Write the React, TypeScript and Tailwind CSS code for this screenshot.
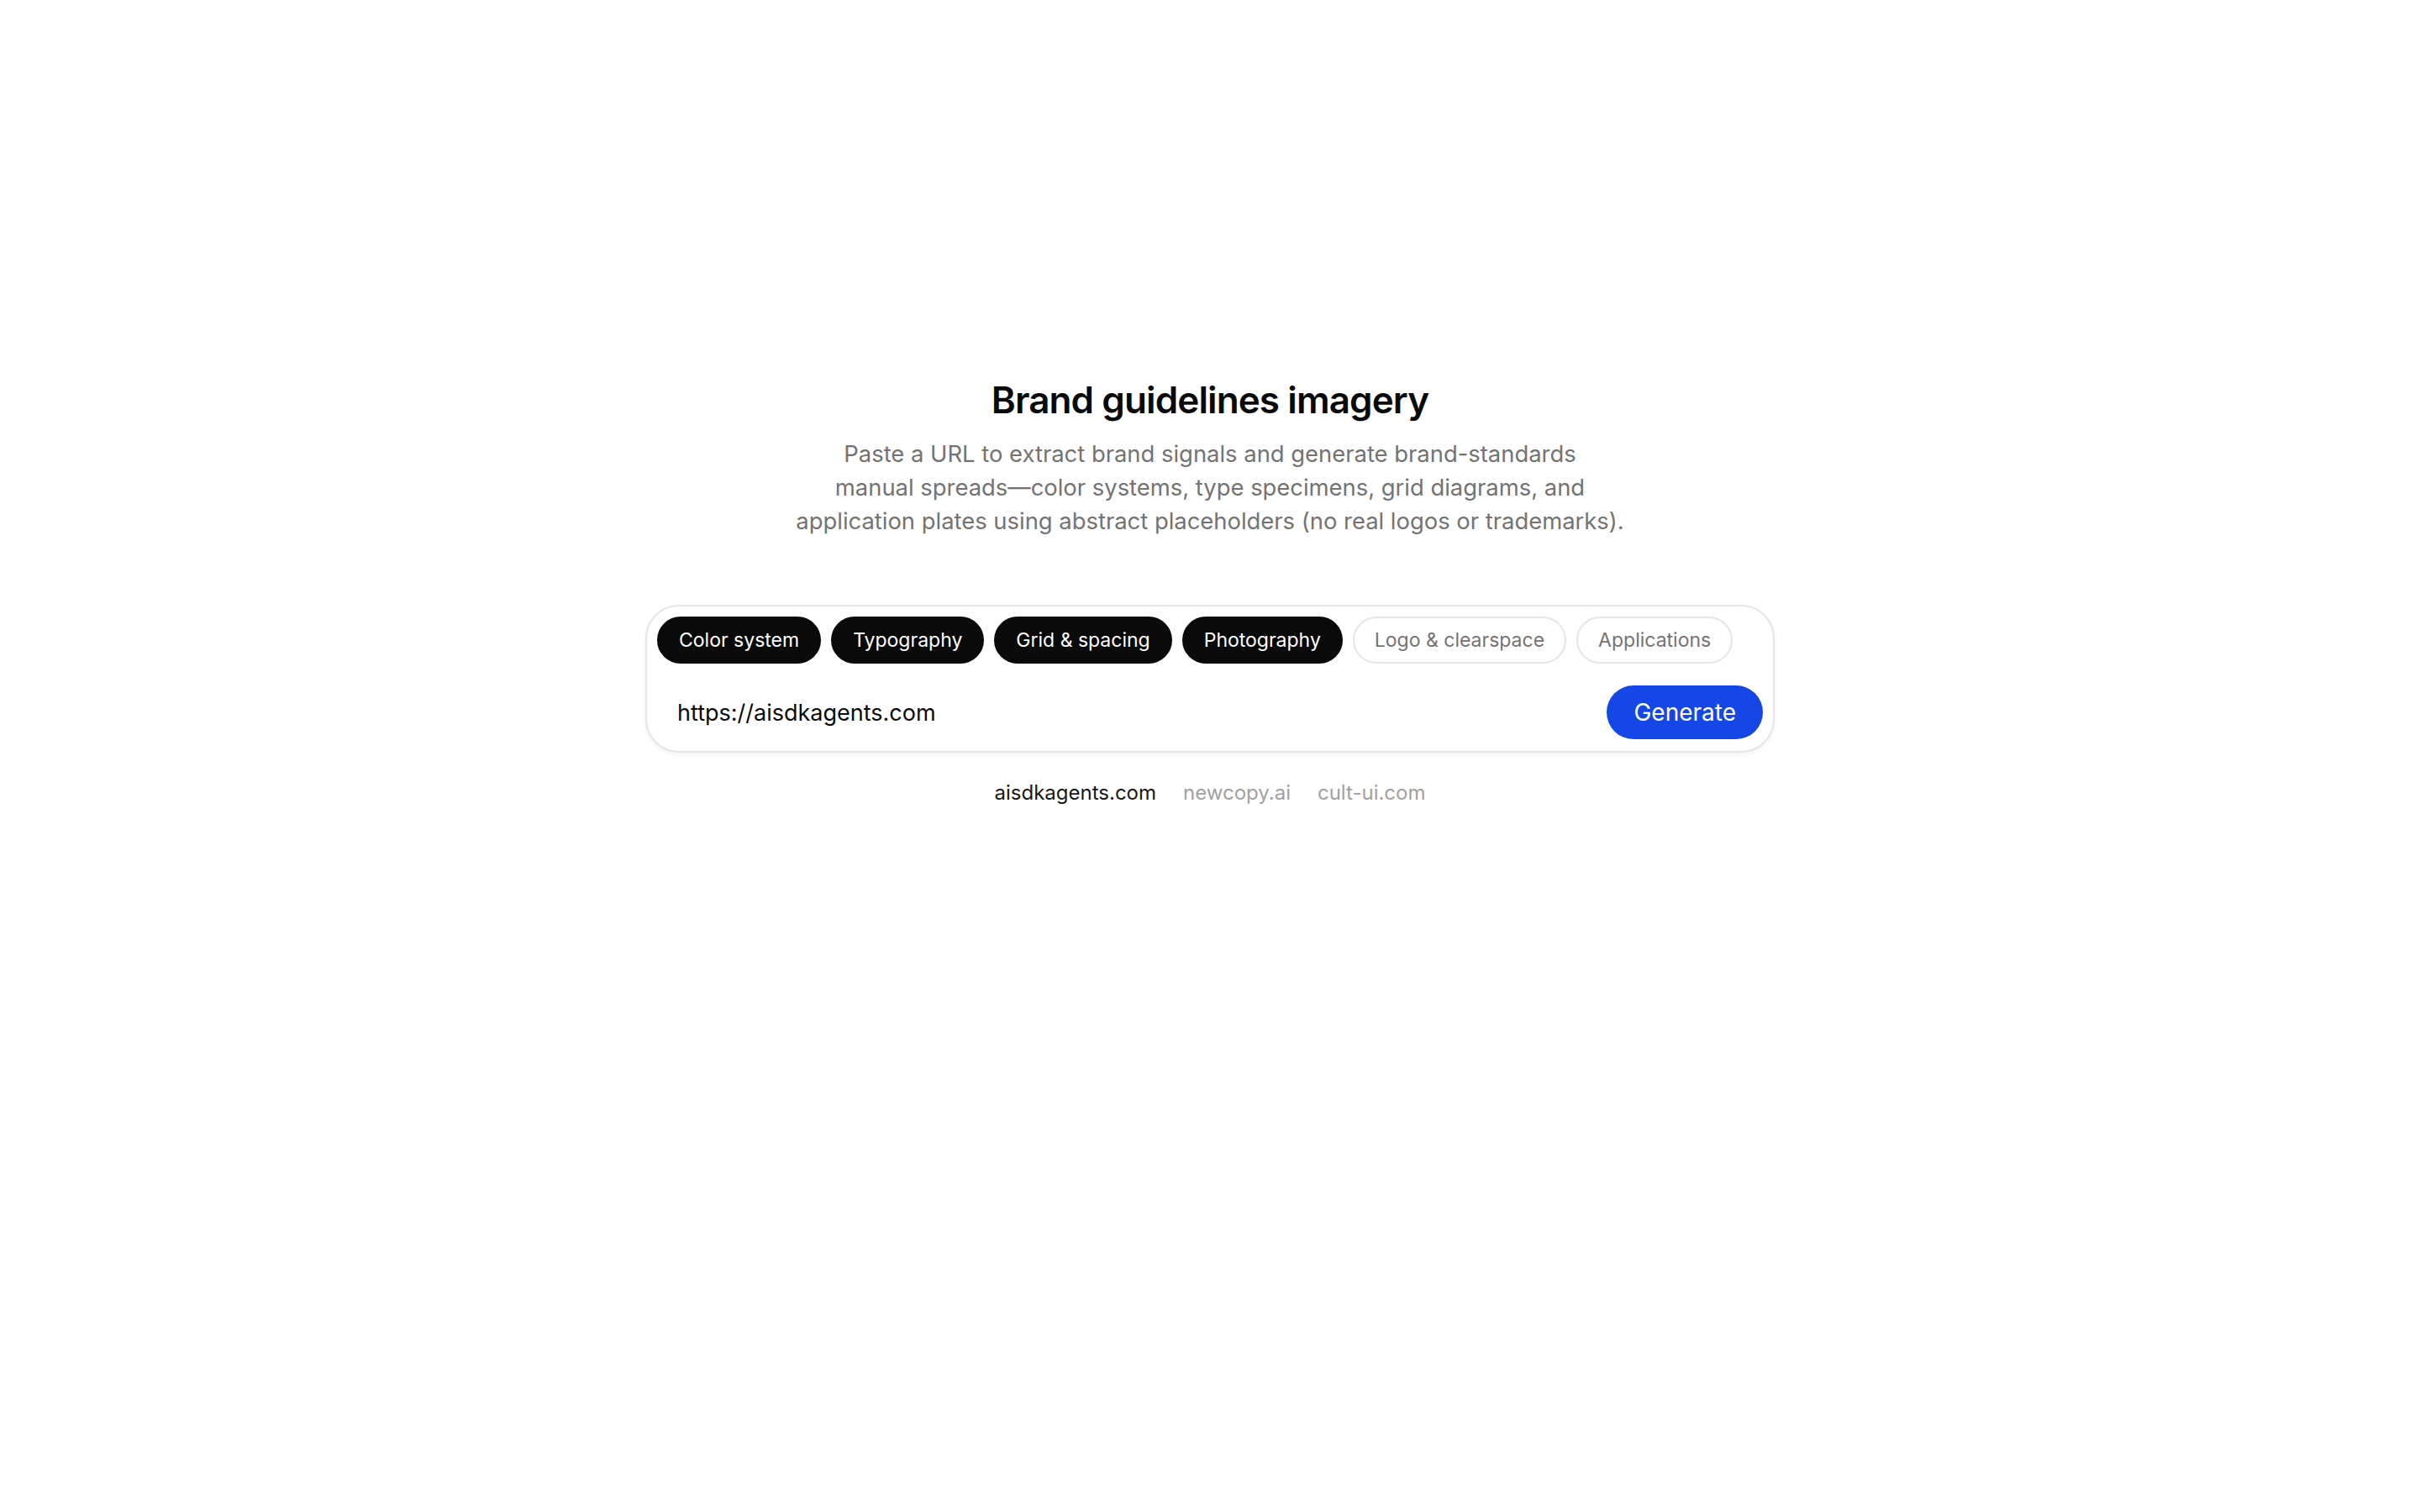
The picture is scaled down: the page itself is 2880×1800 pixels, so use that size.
import React from "react";

const chips: { label: string; active: boolean }[] = [
  { label: "Color system", active: true },
  { label: "Typography", active: true },
  { label: "Grid & spacing", active: true },
  { label: "Photography", active: true },
  { label: "Logo & clearspace", active: false },
  { label: "Applications", active: false },
];

export default function App() {
  return (
    <div
      className="min-h-screen w-full bg-white text-neutral-950"
      style={{ fontFamily: "Inter, 'Noto Sans', Arial, sans-serif" }}
    >
      <main className="flex flex-col items-center px-8 pt-[448px]">
        <h1 className="text-[44px] leading-[56px] font-semibold tracking-[-0.02em] text-[#0a0a0a]">
          Brand guidelines imagery
        </h1>
        <p className="mt-4 text-center text-[27.4px] leading-[40px] text-neutral-500">
          <span className="block">Paste a URL to extract brand signals and generate brand-standards</span>
          <span className="block">manual spreads—color systems, type specimens, grid diagrams, and</span>
          <span className="block">application plates using abstract placeholders (no real logos or trademarks).</span>
        </p>

        <div className="mt-20 w-[1344px] rounded-[40px] border-2 border-neutral-200 bg-white p-3 pb-[14px] shadow-[0_2px_6px_rgba(0,0,0,0.06)]">
          <div className="flex flex-wrap items-center gap-3">
            {chips.map((c) => (
              <button
                key={c.label}
                type="button"
                className={
                  c.active
                    ? "h-14 rounded-full border-2 border-[#0a0a0a] bg-[#0a0a0a] px-6 text-[23px] text-white"
                    : "h-14 rounded-full border-2 border-neutral-200 bg-white px-6 text-[23px] text-neutral-500"
                }
              >
                {c.label}
              </button>
            ))}
          </div>
          <div className="mt-[26px] flex items-center gap-4">
            <input
              type="text"
              defaultValue="https://aisdkagents.com"
              className="h-16 min-w-0 flex-1 bg-transparent px-6 text-[27px] text-[#0a0a0a] outline-none"
            />
            <button
              type="button"
              className="h-16 rounded-full bg-blue-700 px-8 text-[28px] text-white"
            >
              Generate
            </button>
          </div>
        </div>

        <div className="mt-8 flex items-center gap-8 text-[24px] leading-8">
          <span className="text-neutral-900">aisdkagents.com</span>
          <span className="text-neutral-400">newcopy.ai</span>
          <span className="text-neutral-400">cult-ui.com</span>
        </div>
      </main>
    </div>
  );
}
